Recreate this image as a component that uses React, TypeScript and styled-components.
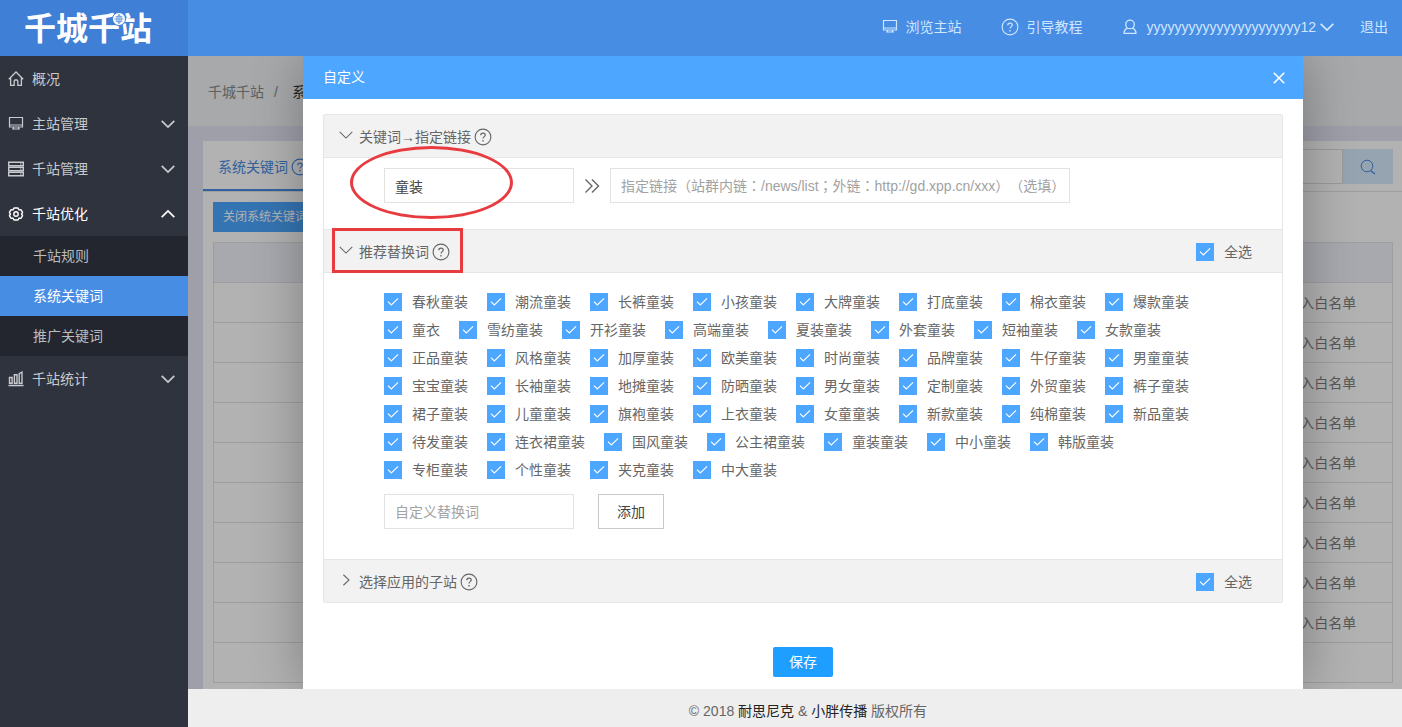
import React, { useState } from 'react';
import styled, { createGlobalStyle } from 'styled-components';

const GlobalStyle = createGlobalStyle`
  * { box-sizing: border-box; }
  body { margin: 0; }
  body, button, input {
    font-family: "Liberation Sans", "Noto Sans CJK SC", sans-serif;
    font-size: 14px;
    line-height: 20px;
    text-spacing-trim: space-all;
  }
  button { border: 0; padding: 0; background: none; color: inherit; cursor: pointer; }
  a { color: inherit; text-decoration: none; }
  ul { list-style: none; margin: 0; padding: 0; }
  h1, h2 { margin: 0; font-size: inherit; font-weight: 400; }
  svg { display: block; flex: none; }
`;

/* ---------- icons ---------- */

const Icon = styled.svg.attrs({ viewBox: '0 0 16 16', 'aria-hidden': true })<{ $size?: number }>`
  width: ${p => p.$size ?? 16}px;
  height: ${p => p.$size ?? 16}px;
  fill: none;
  stroke: currentColor;
  stroke-width: 1.2;
`;

const HomeIcon = () => (
  <Icon><path d="M.8 8.2 8 1l7.200 7.200M2.600 7v7.400h3.600V10a1 1 0 0 1 1-1h1.600a1 1 0 0 1 1 1v4.400h3.600V7" strokeWidth="1.300" /></Icon>
);
const MonitorIcon = () => (
  <Icon><path d="M1.500 1.500h13v9.500h-13zM1 9h14M5.500 11v2M10.500 11v2M4 13h8" strokeWidth="1.200" /></Icon>
);
const ServerIcon = () => (
  <Icon>
    <path d="M.7 1.200h14.600v3.400H.7zM.7 6.300h14.600v3.400H.7zM.7 11.400h14.600v3.400H.7z" strokeWidth="1.400" />
    <path d="M12 2.900h1.500M12 8h1.500M12 13.100h1.500" strokeWidth="1" />
  </Icon>
);
const GearIcon = () => (
  <Icon $size={16}>
    <path d="M6 2h4l1 1.900 2.100-.1 1.500 2.500L13.500 8l1.100 1.700-1.500 2.500-2.100-.1L10 14H6l-1-1.900-2.100.1-1.500-2.500L2.500 8 1.400 6.300l1.500-2.500 2.100.1z" strokeWidth="1.400" strokeLinejoin="round" />
    <circle cx="8" cy="8" r="2.200" strokeWidth="1.400" />
  </Icon>
);
const ChartIcon = () => (
  <Icon><path d="M.5 14.500h15M1.500 6.500h2.600v5.800H1.500zM6.400 3.800H9v8.500H6.400zM11.200 2.600 14 1.200v11.100h-2.800z" strokeWidth="1.400" /></Icon>
);
const UserIcon = () => (
  <Icon>
    <circle cx="8" cy="5.400" r="4.300" strokeWidth="1.300" />
    <path d="M5.500 9.200C3.400 10.200 2 12 2 14.400h12c0-2.400-1.400-4.200-3.500-5.200" strokeWidth="1.300" />
  </Icon>
);
const HelpIcon = () => (
  <Icon $size={18}>
    <circle cx="8" cy="8" r="7" strokeWidth="1" />
    <path d="M6 6.500C6 5.200 6.900 4.500 8 4.500s2 .7 2 1.800c0 1.300-2 1.500-2 3.100" strokeWidth="1.100" />
    <path d="M8 10.600v1.300" />
  </Icon>
);
const SearchIcon = () => (
  <Icon><circle cx="7" cy="7" r="5.800" strokeWidth="1" /><path d="m10.500 11.500 4.500 3.500" strokeWidth="1.400" /></Icon>
);
const CloseIcon = () => (
  <Icon $size={14}><path d="m2 2 12 12M14 2 2 14" strokeWidth="1.800" /></Icon>
);
const Chevron = ({ dir = 'down', weight = 2 }: { dir?: 'up' | 'down' | 'right'; weight?: number }) => {
  const d = { down: 'm.8 4.500 7.200 7 7.200-7', up: 'm.8 11.500 7.200-7 7.200 7', right: 'm5 2 6.500 6L5 14' }[dir];
  return <Icon $size={14}><path d={d} strokeWidth={weight} /></Icon>;
};
const DoubleArrow = () => (
  <Icon><path d="m1.500 1.500 6.500 6.500-6.500 6.500M8 1.500 14.500 8 8 14.500" strokeWidth="1.400" /></Icon>
);
const Tick = () => (
  <Icon $size={18}><path d="m3.500 7.600 3 3 6-5.800" strokeWidth="1" /></Icon>
);

/* ---------- header ---------- */

const Page = styled.div`
  height: 100vh;
  display: grid;
  grid-template: 56px minmax(0, 1fr) / 188px minmax(0, 1fr);
  overflow: hidden;
`;

const Brand = styled.a`
  position: relative;
  display: flex;
  align-items: center;
  justify-content: center;
  padding: 0 12px 4px 0;
  background: #3f7fd6;
  color: #fff;
  font: 700 32px/40px "Noto Sans CJK SC", sans-serif;
`;

const Globe = styled.svg`
  position: absolute;
  left: 112px;
  top: 12px;
  width: 14px;
  height: 14px;
`;

const TopBar = styled.header`
  display: flex;
  align-items: center;
  justify-content: flex-end;
  gap: 40px;
  padding: 0 14px 2px;
  background: #478de4;
  color: #cfe6ff;
  > :last-child { margin-left: -14px; }
`;

const TopLink = styled.a`
  display: flex;
  align-items: center;
  gap: 7px;
`;

const UserButton = styled.button`
  display: flex;
  align-items: center;
  gap: 8px;
  svg:last-child { margin-left: -4px; }
`;

/* ---------- sidebar ---------- */

const Sidebar = styled.nav`
  background: #2f333e;
  color: #c8cacd;
`;

const MenuItem = styled.button<{ $open?: boolean }>`
  width: 100%;
  height: 45px;
  display: flex;
  align-items: center;
  gap: 8px;
  padding: 0 13px 0 8px;
  color: ${p => (p.$open ? '#fff' : 'inherit')};
  span { flex: 1; text-align: left; }
`;

const SubMenu = styled.ul`
  background: #23262e;
`;

const SubLink = styled.a<{ $active?: boolean }>`
  display: block;
  padding: 0 33px;
  line-height: 40px;
  background: ${p => (p.$active ? '#478de4' : 'transparent')};
  color: ${p => (p.$active ? '#fff' : '#b9bbbf')};
`;

/* ---------- page behind the dialog ---------- */

const Main = styled.main`
  display: flex;
  flex-direction: column;
  min-height: 0;
`;

const Stage = styled.div`
  position: relative;
  flex: 1;
  min-height: 0;
  overflow: hidden;
  background: #e2e4f2;
`;

const Breadcrumb = styled.nav`
  display: flex;
  gap: 10px;
  padding: 26px 20px 24px;
  background: #f0f2f5;
  color: #888;
  white-space: nowrap;
  b { margin-left: 4px; font-weight: 400; color: #333; }
`;

const Card = styled.section`
  margin: 15px 0 0 15px;
  background: #fff;
`;

const CardHead = styled.div`
  display: flex;
  justify-content: space-between;
  height: 51px;
  padding-right: 9px;
  border-bottom: 1px solid #e2e2e2;
`;

const Tab = styled.button`
  display: flex;
  align-items: center;
  gap: 3px;
  padding: 3px 15px 0;
  border-bottom: 2px solid #478de4;
  color: #478de4;
`;

const SearchBox = styled.form`
  display: flex;
  height: 35px;
  margin-top: 8px;
  input { width: 190px; border: 1px solid #ddd; }
  button { width: 50px; display: grid; place-items: center; background: #d6ebfc; color: #478de4; }
`;

const CardBody = styled.div`
  padding: 10px 9px 20px 10px;
`;

const SmallButton = styled.button`
  height: 30px;
  padding: 0 10px;
  background: #4da6ff;
  color: #fff;
  font-size: 12px;
`;

const Table = styled.table`
  width: 100%;
  margin-top: 10px;
  border-collapse: collapse;
  table-layout: fixed;
  color: #808080;
  th, td { height: 40px; padding: 0; border: 1px solid #e2e2e2; border-width: 1px 0; text-align: center; }
  th { background: #f0f2f9; }
  border: 1px solid #e2e2e2;
`;

const Footer = styled.footer`
  height: 38px;
  padding: 12px 0 0 26px;
  background: #eee;
  color: #666;
  text-align: center;
  a { color: #222; }
`;

/* ---------- dialog ---------- */

const Overlay = styled.div`
  position: absolute;
  inset: 0;
  display: flex;
  justify-content: center;
  padding-left: 16px;
  background: rgba(0, 0, 0, 0.3);
`;

const Dialog = styled.div`
  width: 1000px;
  max-width: 100%;
  height: 100%;
  background: #fff;
  color: #666;
  box-shadow: 1px 1px 50px rgba(0, 0, 0, 0.3);
`;

const DialogHead = styled.header`
  display: flex;
  align-items: center;
  justify-content: space-between;
  height: 43px;
  padding: 0 17px 0 20px;
  background: #4da6ff;
  color: #fff;
  h1 { padding-bottom: 2px; }
`;

const DialogBody = styled.div`
  padding: 15px 20px;
`;

const Accordion = styled.div`
  border: 1px solid #e6e6e6;
  border-radius: 2px;
`;

const SectionHead = styled.div`
  position: relative;
  display: flex;
  align-items: center;
  justify-content: space-between;
  height: 42px;
  padding: 2px 30px 0 15px;
  background: #f2f2f2;
`;

const SectionToggle = styled.button`
  display: flex;
  align-items: center;
  gap: 6px;
  > svg { margin-bottom: 4px; }
  h2 { display: flex; align-items: center; gap: 3px; }
`;

const SectionBody = styled.div<{ $bottom: number }>`
  position: relative;
  padding: 10px 60px ${p => p.$bottom}px;
  border: solid #e6e6e6;
  border-width: 1px 0;
`;

const FieldRow = styled.div`
  display: flex;
  align-items: center;
  gap: 10px;
`;

const TextField = styled.input<{ $width: number }>`
  width: ${p => p.$width}px;
  height: 35px;
  padding: 0 10px;
  border: 1px solid #e2e2e2;
  background: #fff;
  color: #444;
  &::placeholder {
    color: #a2a2a2;
    opacity: 1;
    font-family: "Liberation Sans", "Noto Sans CJK TC", sans-serif;
  }
`;

const WordList = styled.div`
  display: flex;
  flex-wrap: wrap;
  gap: 8px 19px;
  max-width: 820px;
  padding: 9px 0 14px;
`;

const CheckLabel = styled.label`
  display: flex;
  align-items: center;
  gap: 10px;
  line-height: 20px;
  white-space: nowrap;
`;

const CheckBox = styled.span`
  display: grid;
  color: #fff;
  > * { grid-area: 1 / 1; }
  svg { pointer-events: none; }
  input {
    appearance: none;
    width: 18px;
    height: 18px;
    margin: 0;
    border: 1px solid #d2d2d2;
    background: #fff;
  }
  input:checked { border-color: #4da6ff; background: #4da6ff; }
`;

const AddButton = styled.button`
  height: 35px;
  margin-left: 14px;
  padding: 0 18px;
  border: 1px solid #c9c9c9;
  background: #fff;
  color: #444;
`;

const Actions = styled.div`
  display: flex;
  justify-content: center;
  padding-top: 44px;
`;

const SaveButton = styled.button`
  width: 60px;
  height: 30px;
  border-radius: 2px;
  background: #1e9fff;
  color: #fff;
`;

/* red marks lying over the dialog */
const Mark = styled.div`
  position: absolute;
  z-index: 1;
  border: 3px solid #e83b40;
  pointer-events: none;
`;

const CircleMark = styled(Mark)`
  left: 26px;
  top: -12px;
  width: 163px;
  height: 73px;
  border-radius: 50%;
`;

const BoxMark = styled(Mark)`
  left: 8px;
  top: -2px;
  width: 131px;
  height: 45px;
`;

const WORDS = (
  '春秋童装 潮流童装 长裤童装 小孩童装 大牌童装 打底童装 棉衣童装 爆款童装 ' +
  '童衣 雪纺童装 开衫童装 高端童装 夏装童装 外套童装 短袖童装 女款童装 ' +
  '正品童装 风格童装 加厚童装 欧美童装 时尚童装 品牌童装 牛仔童装 男童童装 ' +
  '宝宝童装 长袖童装 地摊童装 防晒童装 男女童装 定制童装 外贸童装 裤子童装 ' +
  '裙子童装 儿童童装 旗袍童装 上衣童装 女童童装 新款童装 纯棉童装 新品童装 ' +
  '待发童装 连衣裙童装 国风童装 公主裙童装 童装童装 中小童装 韩版童装 ' +
  '专柜童装 个性童装 夹克童装 中大童装'
).split(' ');

interface CheckProps {
  label: string;
  checked: boolean;
  onChange: () => void;
}

const Check = ({ label, checked, onChange }: CheckProps) => (
  <CheckLabel>
    <CheckBox>
      <input type="checkbox" checked={checked} onChange={onChange} />
      {checked && <Tick />}
    </CheckBox>
    {label}
  </CheckLabel>
);

export default function App() {
  const [off, setOff] = useState<string[]>([]);
  const [allSites, setAllSites] = useState(true);
  const toggle = (w: string) => setOff(o => (o.includes(w) ? o.filter(x => x !== w) : [...o, w]));

  return (
    <>
      <GlobalStyle />
      <Page>
        <Brand href="#">
          千城千站
          <Globe viewBox="0 0 14 14" aria-hidden="true">
            <circle cx="7" cy="7" r="6.500" fill="#fff" stroke="#3f7fd6" />
            <path d="M2.500 7h9M7 2.500v9M3.500 4.800h7M3.500 9.200h7M7 2.500c-3 2.300-3 6.700 0 9M7 2.500c3 2.300 3 6.700 0 9" fill="none" stroke="#3f7fd6" strokeWidth=".7" />
          </Globe>
        </Brand>
        <TopBar>
          <TopLink href="#"><MonitorIcon />浏览主站</TopLink>
          <TopLink href="#"><HelpIcon />引导教程</TopLink>
          <UserButton type="button"><UserIcon />yyyyyyyyyyyyyyyyyyyyyy12<Chevron /></UserButton>
          <TopLink href="#">退出</TopLink>
        </TopBar>

        <Sidebar>
          <MenuItem type="button"><HomeIcon /><span>概况</span></MenuItem>
          <MenuItem type="button"><MonitorIcon /><span>主站管理</span><Chevron /></MenuItem>
          <MenuItem type="button"><ServerIcon /><span>千站管理</span><Chevron /></MenuItem>
          <MenuItem type="button" $open><GearIcon /><span>千站优化</span><Chevron dir="up" /></MenuItem>
          <SubMenu>
            <li><SubLink href="#">千站规则</SubLink></li>
            <li><SubLink href="#" $active>系统关键词</SubLink></li>
            <li><SubLink href="#">推广关键词</SubLink></li>
          </SubMenu>
          <MenuItem type="button"><ChartIcon /><span>千站统计</span><Chevron /></MenuItem>
        </Sidebar>

        <Main>
          <Stage>
            <Breadcrumb><a href="#">千城千站</a><span>/</span><b>系统关键词</b></Breadcrumb>
            <Card>
              <CardHead>
                <Tab type="button">系统关键词<HelpIcon /></Tab>
                <SearchBox>
                  <input type="text" aria-label="搜索" />
                  <button type="button" aria-label="搜索"><SearchIcon /></button>
                </SearchBox>
              </CardHead>
              <CardBody>
                <SmallButton type="button">关闭系统关键词</SmallButton>
                <Table>
                  <colgroup><col /><col /><col /><col /><col /><col width="142" /></colgroup>
                  <thead><tr>{[0, 1, 2, 3, 4, 5].map(c => <th key={c} />)}</tr></thead>
                  <tbody>
                    {[0, 1, 2, 3, 4, 5, 6, 7, 8, 9].map(r => (
                      <tr key={r}><td /><td /><td /><td /><td /><td>{r < 9 && '加入白名单'}</td></tr>
                    ))}
                  </tbody>
                </Table>
              </CardBody>
            </Card>

            <Overlay>
              <Dialog role="dialog" aria-label="自定义">
                <DialogHead>
                  <h1>自定义</h1>
                  <button type="button" aria-label="关闭"><CloseIcon /></button>
                </DialogHead>
                <DialogBody>
                  <Accordion>
                    <SectionHead>
                      <SectionToggle type="button">
                        <Chevron weight={1.2} /><h2>关键词→指定链接<HelpIcon /></h2>
                      </SectionToggle>
                    </SectionHead>
                    <SectionBody $bottom={26}>
                      <FieldRow>
                        <TextField $width={190} type="text" aria-label="关键词" defaultValue="童装" />
                        <DoubleArrow />
                        <TextField $width={460} type="text" aria-label="指定链接" placeholder="指定链接（站群内链：/news/list；外链：http://gd.xpp.cn/xxx）（选填）" />
                      </FieldRow>
                      <CircleMark />
                    </SectionBody>
                    <SectionHead>
                      <SectionToggle type="button">
                        <Chevron weight={1.2} /><h2>推荐替换词<HelpIcon /></h2>
                      </SectionToggle>
                      <Check label="全选" checked={off.length === 0} onChange={() => setOff(off.length ? [] : WORDS)} />
                      <BoxMark />
                    </SectionHead>
                    <SectionBody $bottom={30}>
                      <WordList>
                        {WORDS.map(w => (
                          <Check key={w} label={w} checked={!off.includes(w)} onChange={() => toggle(w)} />
                        ))}
                      </WordList>
                      <FieldRow>
                        <TextField $width={190} type="text" aria-label="自定义替换词" placeholder="自定义替换词" />
                        <AddButton type="button">添加</AddButton>
                      </FieldRow>
                    </SectionBody>
                    <SectionHead>
                      <SectionToggle type="button">
                        <Chevron dir="right" weight={1.2} /><h2>选择应用的子站<HelpIcon /></h2>
                      </SectionToggle>
                      <Check label="全选" checked={allSites} onChange={() => setAllSites(v => !v)} />
                    </SectionHead>
                  </Accordion>
                  <Actions><SaveButton type="button">保存</SaveButton></Actions>
                </DialogBody>
              </Dialog>
            </Overlay>
          </Stage>
          <Footer>© 2018 <a href="#">耐思尼克</a> &amp; <a href="#">小胖传播</a> 版权所有</Footer>
        </Main>
      </Page>
    </>
  );
}
